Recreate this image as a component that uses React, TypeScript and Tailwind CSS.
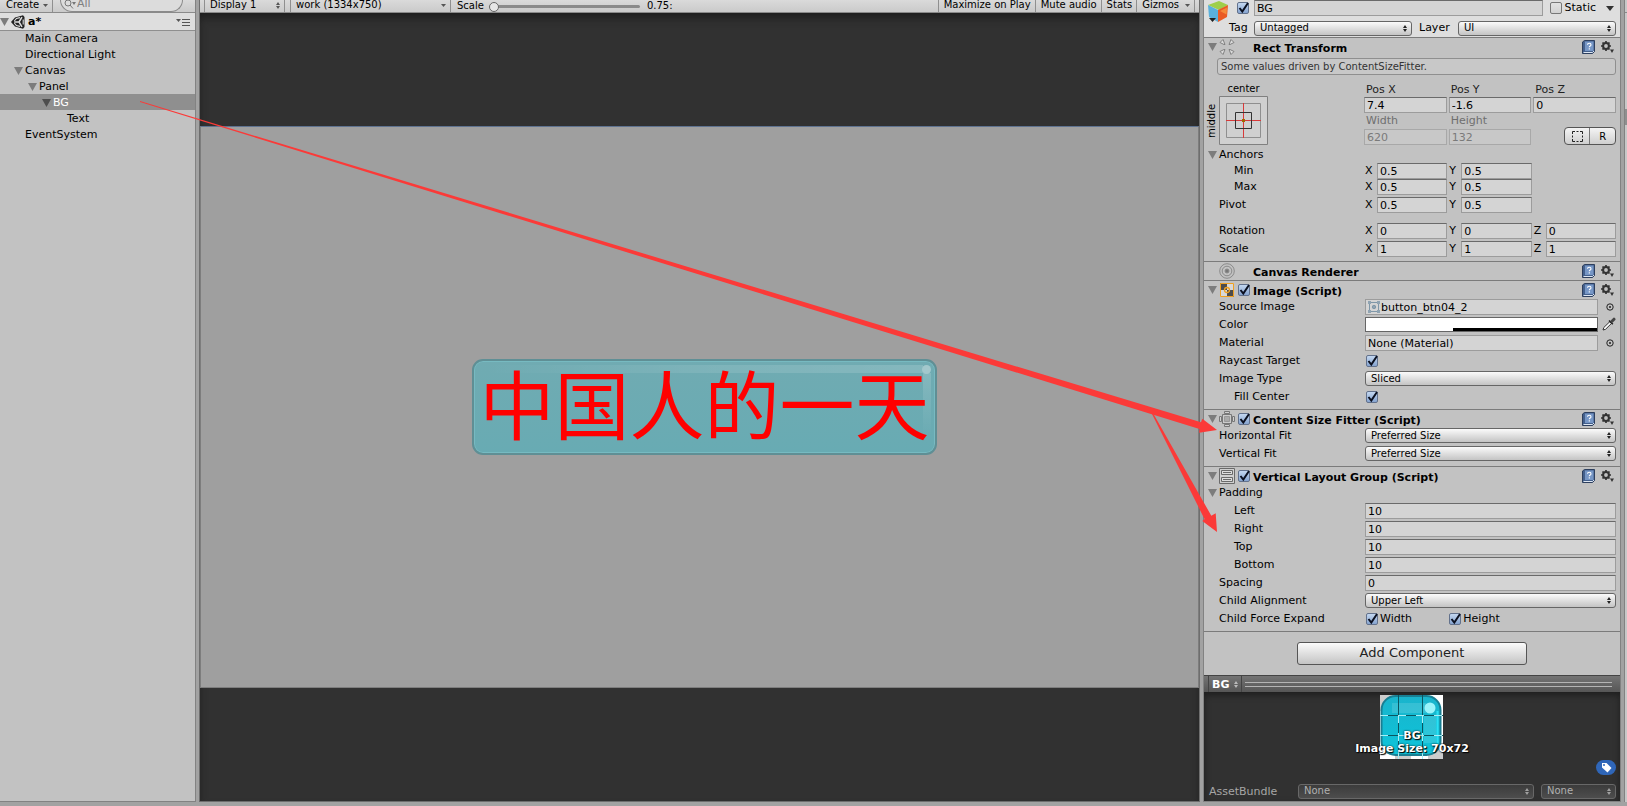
import { useState } from 'react';
import type { ReactNode } from 'react';
import clsx from 'clsx';

const FIELD = 'h-4 w-full min-w-0 border border-[#9c9c9c] border-t-[#6a6a6a] bg-[#d4d4d4] px-0.5 text-[11px] leading-none text-black outline-none';

function Caret({ className }: { className?: string }) {
  return (
    <svg viewBox="0 0 5 3" className={clsx('h-[3px] w-[5px] shrink-0', className)}>
      <path d="M0 0h5L2.500 3z" fill="#555" />
    </svg>
  );
}

function UpDown({ color = '#222' }: { color?: string }) {
  return (
    <svg viewBox="0 0 4 7" className="h-[7px] w-1 shrink-0">
      <path d="M0 3h4L2 0zM0 4h4L2 7z" fill={color} />
    </svg>
  );
}

function Foldout({ dark, label }: { dark?: boolean; label: string }) {
  return (
    <button type="button" aria-label={`Toggle ${label}`} className="flex w-[11px] shrink-0 items-center">
      <svg viewBox="0 0 9 8" className="h-2 w-[9px]">
        <path d="M0 0h9L4.500 8z" fill={dark ? '#4e4e4e' : '#7c7c7c'} />
      </svg>
    </button>
  );
}

function Check({ label, on = true, id }: { label?: string; on?: boolean; id?: string }) {
  return (
    <span className="grid size-3 shrink-0 place-items-center">
      <input
        id={id}
        type="checkbox"
        defaultChecked={on}
        aria-label={label}
        className="peer col-start-1 row-start-1 size-3 appearance-none rounded-[2px] border border-[#777] bg-linear-to-b from-[#e2e2e2] to-[#d2d2d2] checked:border-[#62718c] checked:from-[#c3d7f0] checked:to-[#86a4d0]"
      />
      <svg viewBox="0 0 12 12" className="pointer-events-none invisible col-start-1 row-start-1 size-3 overflow-visible peer-checked:visible">
        <path d="M2.500 6l2.800 3.500L11 1" fill="none" stroke="#0b1020" strokeWidth="2" />
      </svg>
    </span>
  );
}

function Popup({ value, label, dark, id }: { value: string; label?: string; dark?: boolean; id?: string }) {
  return (
    <span className="grid min-w-0 flex-1 items-center">
      <select
        id={id}
        aria-label={label}
        className={clsx(
          'col-start-1 row-start-1 h-[15px] w-full appearance-none rounded-[3px] border px-[5px] text-[10px] leading-none outline-none',
          dark
            ? 'border-[#686868] bg-linear-to-b from-[#3c3c3c] to-[#4d4d4d] text-[#b0b0b0]'
            : 'border-[#666] bg-linear-to-b from-[#fbfbfb] to-[#c4c4c4] text-black',
        )}
      >
        <option>{value}</option>
      </select>
      <span className="pointer-events-none col-start-1 row-start-1 mr-[5px] justify-self-end">
        <UpDown color={dark ? '#a0a0a0' : '#222'} />
      </span>
    </span>
  );
}

function UnityLogo() {
  return (
    <svg viewBox="0 0 14 14" className="size-3.5 shrink-0">
      <path d="M0 7L4 2.500 12 .300 13.500 2v10L12 13.700 4 11.500z" fill="#222" />
      <path d="M8 7H3.200M8 7l3-4.800M8 7l3 4.800" stroke="#dedede" strokeWidth="1.500" />
      <path d="M3.300 6L5.500 3.500 9 2.600M3.300 8l2.200 2.500 3.500.900M12.200 4.500v5" stroke="#dedede" strokeWidth="1.100" fill="none" />
    </svg>
  );
}

const tree = [
  { name: 'Main Camera', indent: 'pl-[14px]' },
  { name: 'Directional Light', indent: 'pl-[14px]' },
  { name: 'Canvas', indent: 'pl-[14px]', open: true },
  { name: 'Panel', indent: 'pl-[28px]', open: true },
  { name: 'BG', indent: 'pl-[42px]', open: true },
  { name: 'Text', indent: 'pl-[56px]' },
  { name: 'EventSystem', indent: 'pl-[14px]' },
];

function Hierarchy() {
  const [selected, setSelected] = useState('BG');

  return (
    <aside className="flex w-[196px] shrink-0 flex-col border-r border-b border-[#828282] bg-[#c2c2c2]">
      <div className="flex h-[13px] shrink-0 items-center border-b border-[#8a8a8a] bg-linear-to-b from-[#dadada] to-[#cacaca] pr-3 text-[10px] leading-none">
        <button type="button" className="flex h-full w-[53px] items-center justify-between border-r border-[#8f8f8f] pr-1 pb-0.5 pl-1.5 leading-2.5">
          Create
          <Caret />
        </button>
        <label className="ml-[7px] flex h-3 flex-1 items-center gap-px self-start rounded-b-full border border-t-0 border-[#8a8a8a] bg-[#dcdcdc] pb-1 pl-[3px]">
          <svg viewBox="0 0 12 10" className="h-2.5 w-3 shrink-0" fill="none" stroke="#777">
            <circle cx="4" cy="4" r="3" />
            <path d="M6 6l3 3.500" />
            <path d="M8 3h4l-2 3z" fill="#777" stroke="none" />
          </svg>
          <input aria-label="Search" placeholder="All" className="h-3 w-full min-w-0 text-[11px] leading-3 outline-none placeholder:text-[#808080]" />
        </label>
      </div>
      <div className="flex h-[18px] shrink-0 items-center border-b border-[#8f8f8f] bg-[#dedede] pr-[5px] text-[11px] font-bold">
        <Foldout label="scene" />
        <UnityLogo />
        <span className="ml-[3px] flex-1 pt-px">a*</span>
        <button type="button" aria-label="Scene menu" className="flex items-start">
          <svg viewBox="0 0 14 8" className="h-2 w-3.5">
            <path d="M0 1h5L2.500 4z" fill="#555" />
            <path d="M6 1.500h8M6 4.500h8M6 7.500h8" stroke="#555" />
          </svg>
        </button>
      </div>
      <ul className="-mt-px text-[11px] leading-[15px]">
        {tree.map((node) => (
          <li
            key={node.name}
            onClick={() => setSelected(node.name)}
            className={clsx('flex h-4 items-center pt-px', node.indent, selected === node.name && 'bg-[#8f8f8f] text-white')}
          >
            {node.open ? <Foldout label={node.name} dark={selected === node.name} /> : <span className="w-[11px]" />}
            {node.name}
          </li>
        ))}
      </ul>
    </aside>
  );
}

function ToolButton({ children }: { children: ReactNode }) {
  return (
    <button type="button" className="flex h-full items-center border-l border-[#8f8f8f] pr-1 pb-0.5 pl-[5px]">
      {children}
    </button>
  );
}

function GameView() {
  return (
    <main className="flex min-w-0 flex-1 flex-col border-x border-b border-[#6e6e6e] bg-[#313131]">
      <div className="flex h-[13px] shrink-0 items-center overflow-hidden border-b border-[#8a8a8a] bg-linear-to-b from-[#dadada] to-[#cacaca] text-[10px] leading-none whitespace-nowrap">
        <button type="button" className="ml-1 flex h-full w-[81px] items-center justify-between border-x border-[#8f8f8f] px-1 pb-0.5 pl-[5px]">
          Display 1
          <UpDown color="#555" />
        </button>
        <button type="button" className="ml-[5px] flex h-full w-[161px] items-center justify-between border-x border-[#8f8f8f] px-1 pb-0.5 pl-[5px]">
          work (1334x750)
          <Caret />
        </button>
        <label htmlFor="scale" className="ml-1.5 pb-px">Scale</label>
        <input
          id="scale"
          type="range"
          defaultValue={0}
          className="ml-[5px] h-2.5 w-[151px] appearance-none bg-transparent [&::-webkit-slider-runnable-track]:h-[3px] [&::-webkit-slider-runnable-track]:rounded-full [&::-webkit-slider-runnable-track]:bg-[#8a8a8a] [&::-webkit-slider-thumb]:-mt-[3px] [&::-webkit-slider-thumb]:size-2.5 [&::-webkit-slider-thumb]:appearance-none [&::-webkit-slider-thumb]:rounded-full [&::-webkit-slider-thumb]:border [&::-webkit-slider-thumb]:border-[#666] [&::-webkit-slider-thumb]:bg-[#e6e6e6]"
        />
        <span className="ml-[7px] flex-1 pb-px">0.75:</span>
        <ToolButton>Maximize on Play</ToolButton>
        <ToolButton>Mute audio</ToolButton>
        <ToolButton>Stats</ToolButton>
        <ToolButton>
          <span className="mr-1.5">Gizmos</span>
          <Caret />
        </ToolButton>
        <span className="h-full w-[5px] border-l border-[#8f8f8f]" />
      </div>
      <div className="flex flex-1 flex-col justify-center shadow-[inset_0_6px_10px_-2px_#1c1c1c]">
        <div className="flex aspect-[1334/750] w-full items-center justify-center border border-[#7d7d7d] border-t-[#5f7391] bg-[#9f9f9f] pl-2.5">
          <div className="relative rounded-[11px] border-2 border-[#5f8f95] bg-linear-to-b from-[#70abb2] to-[#68abb3] px-1 shadow-[inset_0_0_0_1px_#77bac1]">
            <div className="absolute top-1 right-3 left-2 h-2 bg-linear-to-r from-transparent via-white/10 to-white/15" />
            <div className="absolute top-3 right-1 h-16 w-2 bg-linear-to-b from-white/15 to-transparent" />
            <div className="absolute top-1 right-1 size-[9px] rounded-full bg-[#a3c8cc]" />
            <p className="relative h-[92px] px-px font-['Noto_Sans_CJK_SC',sans-serif] text-[75px] leading-[82px] whitespace-nowrap text-[#ff0000]">中国人的一天</p>
          </div>
        </div>
      </div>
    </main>
  );
}

function HelpAndGear() {
  return (
    <>
      <button type="button" aria-label="Help" className="mr-1.5">
        <svg viewBox="0 0 13 14" className="h-3.5 w-[13px]">
          <path d="M.5 2L2.500.500h10v11L10.500 13.500H.5z" fill="#44608c" stroke="#2d3f5e" />
          <path d="M3 1.500h8.500v9.500H3z" fill="#7797c6" />
          <path d="M1.500 12.500h9l1.500-1.500" stroke="#dde6f2" fill="none" />
          <path d="M5.500 4.800c0-2 3.500-2 3.500 0 0 1.300-1.700 1.200-1.700 2.500M7.300 8.300v1.300" fill="none" stroke="#fff" strokeWidth="1.100" />
        </svg>
      </button>
      <button type="button" aria-label="Component menu">
        <svg viewBox="0 0 13 12" className="h-3 w-[13px]">
          <circle cx="5" cy="5" r="2.900" fill="none" stroke="#333" strokeWidth="2" />
          <path d="M5 0v2M5 8v2M0 5h2M8 5h2M1.500 1.500l1.400 1.400M7.100 7.100l1.400 1.400M8.500 1.500L7.100 2.900M2.900 7.100L1.500 8.500" stroke="#333" strokeWidth="1.700" />
          <path d="M9 8.500h4L11 12z" fill="#333" />
        </svg>
      </button>
    </>
  );
}

function Section({ title, icon, open = true, check = true, children }: { title: string; icon: ReactNode; open?: boolean; check?: boolean; children?: ReactNode }) {
  return (
    <section className="border-t border-[#7b7b7b]">
      <div className="flex h-[18px] items-center pr-1.5 pl-1">
        {open ? <Foldout label={title} /> : <span className="w-[11px]" />}
        <span className="mr-[3px] flex size-4 shrink-0 items-center justify-center">{icon}</span>
        {check ? <Check label={`Enable ${title}`} /> : <span className="w-3" />}
        <h2 className="ml-[3px] flex-1 pt-0.5 text-[11px] leading-none font-bold whitespace-nowrap">{title}</h2>
        <HelpAndGear />
      </div>
      {children}
    </section>
  );
}

function Row({ label, htmlFor, indent, fold, className = 'h-[18px]', children }: { label: string; htmlFor?: string; indent?: boolean; fold?: boolean; className?: string; children?: ReactNode }) {
  return (
    <div className={clsx('flex items-start pr-1 pl-1', className)}>
      <div className="flex h-4 w-[157px] shrink-0 items-center">
        {fold ? <Foldout label={label} /> : <span className="w-[11px]" />}
        <label htmlFor={htmlFor} className={clsx('pt-px', indent && 'ml-[15px]')}>{label}</label>
      </div>
      {children}
    </div>
  );
}

function Vector({ label, values, indent, className }: { label: string; values: string[]; indent?: boolean; className: string }) {
  return (
    <Row label={label} indent={indent} className={className}>
      <div className="grid flex-1 grid-cols-3 gap-0.5">
        {values.map((value, i) => (
          <label key={i} className="flex items-center">
            <span className="w-3 shrink-0">{'XYZ'[i]}</span>
            <input defaultValue={value} className={FIELD} />
          </label>
        ))}
      </div>
    </Row>
  );
}

function TextRow({ label, value, indent }: { label: string; value: string; indent?: boolean }) {
  return (
    <Row label={label} htmlFor={label} indent={indent}>
      <input id={label} defaultValue={value} className={FIELD} />
    </Row>
  );
}

function PopupRow({ label, value }: { label: string; value: string }) {
  return (
    <Row label={label} htmlFor={label}>
      <Popup id={label} value={value} />
    </Row>
  );
}

function CheckRow({ label, indent }: { label: string; indent?: boolean }) {
  return (
    <Row label={label} htmlFor={label} indent={indent}>
      <span className="pt-0.5 pl-px"><Check id={label} /></span>
    </Row>
  );
}

function PickButton({ label }: { label: string }) {
  return (
    <button type="button" aria-label={label} className="flex h-4 w-[18px] shrink-0 items-center justify-center pl-1.5">
      <svg viewBox="0 0 8 8" className="size-2">
        <circle cx="4" cy="4" r="3.200" fill="none" stroke="#222" />
        <circle cx="4" cy="4" r="1" fill="#222" />
      </svg>
    </button>
  );
}

function RectIcon() {
  return (
    <svg viewBox="0 0 16 16" className="size-4" fill="#ddd" stroke="#808080">
      <path d="M1 3.500L4 .500l2 5-1 0zM15 3.500l-3-3-2 5 1 0zM1 12.500l3 3 2-5-1 0zM15 12.500l-3 3-2-5 1 0z" />
    </svg>
  );
}

function RendererIcon() {
  return (
    <svg viewBox="0 0 16 16" className="size-4" fill="none" stroke="#8a8a8a">
      <circle cx="8" cy="8" r="7.300" />
      <circle cx="8" cy="8" r="4.800" />
      <circle cx="8" cy="8" r="2" fill="#777" />
    </svg>
  );
}

function ImageIcon() {
  return (
    <svg viewBox="0 0 14 14" className="size-3.5">
      <path d="M0 0h14v14H0z" fill="#d8d8d8" />
      <path d="M0 0h7v7H0zM7 7h7v7H7z" fill="#4c4c4c" />
      <path d="M.5.500h13v13H.5z" fill="none" stroke="#f0a020" />
      <circle cx="7" cy="7" r="2.500" fill="none" stroke="#f0a020" strokeWidth="1.300" />
    </svg>
  );
}

function FitterIcon() {
  return (
    <svg viewBox="0 0 16 16" className="size-4" fill="none" stroke="#777">
      <path d="M3.500 3.500h9v9h-9z" fill="#ccc" />
      <path d="M5.500 5.500h5v5h-5z" fill="#aaa" stroke="#999" />
      <path d="M5.500 2.500v-2h5v2zM5.500 13.500v2h5v-2zM2.500 5.500h-2v5h2zM13.500 5.500h2v5h-2z" fill="#d0d0d0" />
    </svg>
  );
}

function LayoutIcon() {
  return (
    <svg viewBox="0 0 16 16" className="size-4" fill="none" stroke="#6a6a6a">
      <path d="M.5.500h15v15H.5z" fill="#d0d0d0" />
      <path d="M2.500 2.500h11v4h-11zM2.500 9.500h11v4h-11z" fill="#ddd" />
      <path d="M4 4.500h8M4 11.500h8" />
    </svg>
  );
}

function ObjectHeader() {
  return (
    <header className="flex h-[37px] shrink-0 bg-[#dedede] pr-1 pl-[3px]">
      <button type="button" aria-label="Object icon" className="shrink-0 self-start">
        <svg viewBox="0 0 22 23" className="h-[23px] w-[22px]">
          <path d="M1 5L12 1l9 4-9 5z" fill="#9fcf4a" />
          <path d="M1 5l10 5v12L2 17z" fill="#5ab0dc" />
          <path d="M11 10l10-5-1 12-9 5z" fill="#ea5a24" />
          <path d="M13 11l7-3.500-.500 7z" fill="#f58a3a" />
          <path d="M2 18h7l-3.500 4z" fill="#222" />
        </svg>
      </button>
      <div className="flex min-w-0 flex-1 flex-col gap-1">
        <div className="flex h-4 items-center">
          <span className="ml-2"><Check label="Active" /></span>
          <input aria-label="Name" defaultValue="BG" className={clsx(FIELD, 'ml-[5px]')} />
          <label className="ml-[7px] flex shrink-0 items-center gap-[3px]">
            <Check on={false} />
            Static
          </label>
          <svg viewBox="0 0 8 5" className="mr-0.5 ml-2.5 h-[5px] w-2 shrink-0"><path d="M0 0h8L4 5z" fill="#333" /></svg>
        </div>
        <div className="flex items-center">
          <label htmlFor="tag" className="w-[25px] shrink-0">Tag</label>
          <Popup id="tag" value="Untagged" />
          <label htmlFor="layer" className="ml-[7px] w-[39px] shrink-0">Layer</label>
          <Popup id="layer" value="UI" />
        </div>
      </div>
    </header>
  );
}

function AnchorPreset() {
  return (
    <div className="grid w-[160px] shrink-0 grid-cols-[15px_49px] grid-rows-[14px_49px]">
      <span className="col-start-2 text-center text-[10px] leading-[14px]">center</span>
      <span className="col-start-1 row-start-2 rotate-180 text-center text-[10px] leading-[15px] [writing-mode:vertical-rl]">middle</span>
      <button type="button" aria-label="Anchor presets" className="row-start-2">
        <svg viewBox="0 0 49 49" className="size-[49px]" fill="none">
          <path d="M.5.500h48v48H.5z" fill="#d0d0d0" stroke="#808080" />
          <path d="M7.500 7.500h34v34h-34z" stroke="#8f8f8f" />
          <path d="M24.500 7v35M7 24.500h35" stroke="#d83a3a" />
          <path d="M16.500 16.500h16v16h-16z" stroke="#333" />
          <path d="M23 23h3v3h-3z" fill="#a06a00" />
        </svg>
      </button>
    </div>
  );
}

function RectTransform() {
  return (
    <Section title="Rect Transform" check={false} icon={<RectIcon />}>
      <p className="mt-0.5 mr-1 ml-[13px] flex h-[17px] items-center rounded-[3px] border border-[#8f8f8f] bg-[#c8c8c8] px-[3px] text-[10px] text-[#333]">
        Some values driven by ContentSizeFitter.
      </p>
      <div className="mt-[7px] mb-0.5 flex pr-1">
        <AnchorPreset />
        <div className="grid flex-1 grid-cols-3 content-start gap-x-0.5">
          {[['Pos X', '7.4'], ['Pos Y', '-1.6'], ['Pos Z', '0']].map(([name, value]) => (
            <label key={name} className="block leading-[15px] text-[#222]">
              <span className="block pl-0.5">{name}</span>
              <input defaultValue={value} className={clsx(FIELD, 'block')} />
            </label>
          ))}
          {[['Width', '620'], ['Height', '132']].map(([name, value]) => (
            <label key={name} className="block leading-4 text-[#6f6f6f]">
              <span className="block pl-0.5">{name}</span>
              <input disabled defaultValue={value} className="block h-4 w-full min-w-0 border border-[#a8a8a8] bg-[#c8c8c8] px-0.5 text-[11px] leading-none text-[#7a7a7a]" />
            </label>
          ))}
          <div className="flex h-[18px] w-[52px] self-end justify-self-end overflow-hidden rounded-[4px] border border-[#555] bg-linear-to-b from-[#f4f4f4] to-[#cfcfcf]">
            <button type="button" aria-label="Blueprint mode" className="flex flex-1 items-center justify-center border-r border-[#777]">
              <svg viewBox="0 0 11 11" className="size-[11px]"><path d="M.5 3V.500H3M4.500.500h2M8 .500h2.500V3M10.500 4.500v2M10.500 8v2.500H8M6.500 10.500h-2M3 10.500H.5V8M.5 6.500v-2" fill="none" stroke="#222" /></svg>
            </button>
            <button type="button" className="flex-1 text-[10px]">R</button>
          </div>
        </div>
      </div>
      <Row label="Anchors" fold className="h-4" />
      <Vector label="Min" indent values={['0.5', '0.5']} className="h-4" />
      <Vector label="Max" indent values={['0.5', '0.5']} className="h-[18px]" />
      <Vector label="Pivot" values={['0.5', '0.5']} className="h-[26px]" />
      <Vector label="Rotation" values={['0', '0', '0']} className="h-[18px]" />
      <Vector label="Scale" values={['1', '1', '1']} className="h-5" />
    </Section>
  );
}

function ImageSection() {
  return (
    <Section title="Image (Script)" icon={<ImageIcon />}>
      <div className="pb-0.5">
        <Row label="Source Image">
          <button type="button" className={clsx(FIELD, 'flex items-center border-t-[#9c9c9c]')}>
            <svg viewBox="0 0 12 12" className="mr-px size-3 shrink-0" stroke="#7f97a8" fill="none">
              <path d="M1.500 1.500h9v9h-9z" />
              <path d="M0 0h3v3H0zM9 0h3v3H9zM0 9h3v3H0zM9 9h3v3H9z" fill="#8fa3b2" stroke="none" />
              <circle cx="6" cy="6" r="1.700" fill="#8fa3b2" />
            </svg>
            button_btn04_2
          </button>
          <PickButton label="Pick source image" />
        </Row>
        <Row label="Color">
          <button type="button" aria-label="Color" className="flex h-[15px] flex-1 items-end justify-end border border-[#666] bg-white">
            <span className="h-[3px] w-5/8 bg-black" />
          </button>
          <button type="button" aria-label="Pick color" className="flex w-[18px] shrink-0 justify-end">
            <svg viewBox="0 0 14 14" className="size-3.5">
              <path d="M1 13l.800-2.500L8 4.500l1.700 1.700L3.500 12.300z" fill="#fff" stroke="#333" />
              <path d="M7 3.500l3.800 3.800" stroke="#222" strokeWidth="1.600" />
              <path d="M10 4.200l2-2" stroke="#444" strokeWidth="3" strokeLinecap="round" />
            </svg>
          </button>
        </Row>
        <Row label="Material">
          <button type="button" className={clsx(FIELD, 'border-t-[#9c9c9c] text-left')}>None (Material)</button>
          <PickButton label="Pick material" />
        </Row>
        <CheckRow label="Raycast Target" />
        <PopupRow label="Image Type" value="Sliced" />
        <CheckRow label="Fill Center" indent />
      </div>
    </Section>
  );
}

function SpritePreview() {
  return (
    <svg viewBox="0 0 63 64" className="col-start-1 row-start-1 h-16 w-[63px]">
      <defs>
        <linearGradient id="sprite" x1="0" y1="0" x2="0" y2="1">
          <stop offset="0" stopColor="#1ab4cc" />
          <stop offset="1" stopColor="#0cc4da" />
        </linearGradient>
      </defs>
      <path d="M0 0h63v64H0z" fill="#fff" />
      <path d="M0 0h15v16H0zM15 48h16v16H15zM48 48h15v16H48z" fill="#ccc" />
      <rect x="1.500" y="1" width="59" height="59" rx="14" fill="url(#sprite)" stroke="#187f93" strokeWidth="2" />
      <path d="M12 8h34v10H12z" fill="#fff" opacity=".13" />
      <path d="M44 20h12v28H44z" fill="#fff" opacity=".12" />
      <path d="M57.500 16v32" stroke="#2be0f4" strokeWidth="2" />
      <circle cx="50" cy="13" r="5.500" fill="#9af4fb" />
      <path d="M18.500 0v64M42.500 0v64M0 20.500h63M0 40.500h63" stroke="#0a5560" />
      <path d="M18.500 20v64M42.500 20v64M0 20.500h63M0 40.500h63" stroke="#a8eef4" strokeDasharray="8 10" />
    </svg>
  );
}

function Preview() {
  return (
    <div className="flex min-h-0 flex-1 flex-col">
      <div className="flex h-[17px] shrink-0 items-center border-t border-[#444] bg-linear-to-b from-[#747474] to-[#565656] pr-2 pl-1">
        <button type="button" className="flex h-full w-[34px] items-center justify-between border-x border-[#444] px-[3px] text-[11px] leading-none font-bold text-white">
          BG
          <UpDown color="#bbb" />
        </button>
        <span className="ml-[3px] h-[5px] flex-1 border-y border-[#b4b4b4]" />
      </div>
      <div className="flex flex-1 flex-col justify-between bg-[#313131] px-1 pt-[3px] pb-px shadow-[inset_0_3px_6px_#1e1e1e]">
        <div className="grid justify-center text-center text-[11px] leading-[13px] font-bold text-white">
          <span className="col-start-1 row-start-1 mx-auto"><SpritePreview /></span>
          <p className="relative col-start-1 row-start-1 pt-[34px] [text-shadow:1px_1px_1px_#000,0_0_2px_#000]">
            BG
            <br />
            Image Size: 70x72
          </p>
        </div>
        <div>
          <button type="button" aria-label="Asset labels" className="mb-2 ml-auto flex h-[15px] w-5 items-center justify-center rounded-full bg-[#2f66b8]">
            <svg viewBox="0 0 11 11" className="size-[11px]">
              <path d="M1 1h4.500L10.500 6 6.500 10.500 1 5.500z" fill="#fff" />
              <circle cx="3" cy="3" r="1" fill="#2f66b8" />
            </svg>
          </button>
          <div className="flex items-center text-[#a6a6a6]">
            <label htmlFor="bundle" className="w-[90px] shrink-0 pt-px pl-px">AssetBundle</label>
            <Popup id="bundle" value="None" dark />
            <span className="ml-[7px] flex w-[75px]"><Popup label="Variant" value="None" dark /></span>
          </div>
        </div>
      </div>
    </div>
  );
}

function Inspector() {
  return (
    <aside className="flex w-[418px] shrink-0 flex-col border-x border-b border-[#828282] bg-[#c2c2c2] text-[11px] whitespace-nowrap">
      <ObjectHeader />
      <RectTransform />
      <Section title="Canvas Renderer" open={false} check={false} icon={<RendererIcon />} />
      <ImageSection />
      <Section title="Content Size Fitter (Script)" icon={<FitterIcon />}>
        <div className="pb-0.5">
          <PopupRow label="Horizontal Fit" value="Preferred Size" />
          <PopupRow label="Vertical Fit" value="Preferred Size" />
        </div>
      </Section>
      <Section title="Vertical Layout Group (Script)" icon={<LayoutIcon />}>
        <div className="pb-0.5">
          <Row label="Padding" fold />
          <TextRow label="Left" value="10" indent />
          <TextRow label="Right" value="10" indent />
          <TextRow label="Top" value="10" indent />
          <TextRow label="Bottom" value="10" indent />
          <TextRow label="Spacing" value="0" />
          <PopupRow label="Child Alignment" value="Upper Left" />
          <Row label="Child Force Expand">
            <div className="grid flex-1 grid-cols-3 pt-0.5 pl-px">
              <label className="flex items-center gap-0.5 leading-3"><Check />Width</label>
              <label className="flex items-center gap-0.5 leading-3"><Check />Height</label>
            </div>
          </Row>
        </div>
      </Section>
      <div className="flex justify-center border-t border-[#7b7b7b] py-2.5">
        <button type="button" className="h-[23px] w-[230px] rounded-[3px] border border-[#555] bg-linear-to-b from-[#fbfbfb] to-[#c4c4c4] pb-0.5 text-[13px] leading-none text-[#222]">
          Add Component
        </button>
      </div>
      <Preview />
    </aside>
  );
}

// Red pointers from the BG node to the two layout components.
function Pointers() {
  return (
    <svg viewBox="0 0 1627 806" preserveAspectRatio="none" className="pointer-events-none absolute inset-0 size-full" fill="#fb3a38">
      <path d="M140 101L1201 422.300 1202.300 418.700 1217 430 1199 432.700 1199.500 429 140 102z" />
      <path d="M1152 414h1.500L1211.300 515.700 1215.700 513.300 1217 532 1202.300 521 1204.500 519z" />
    </svg>
  );
}

export default function App() {
  return (
    <div className="relative flex h-screen overflow-hidden bg-[#a2a2a2] pb-1 font-['DejaVu_Sans',sans-serif] text-[11px] text-black">
      <Hierarchy />
      <span className="w-[3px] shrink-0" />
      <GameView />
      <span className="w-[3px] shrink-0" />
      <Inspector />
      <span className="w-[3px] shrink-0" />
      <div className="flex w-[3px] shrink-0 flex-col border-l border-[#828282] bg-[#c8c8c8]">
        <span className="h-[13px] border-b border-[#8a8a8a]" />
        <span className="mt-24 h-4 bg-[#8f8f8f]" />
      </div>
      <Pointers />
    </div>
  );
}
